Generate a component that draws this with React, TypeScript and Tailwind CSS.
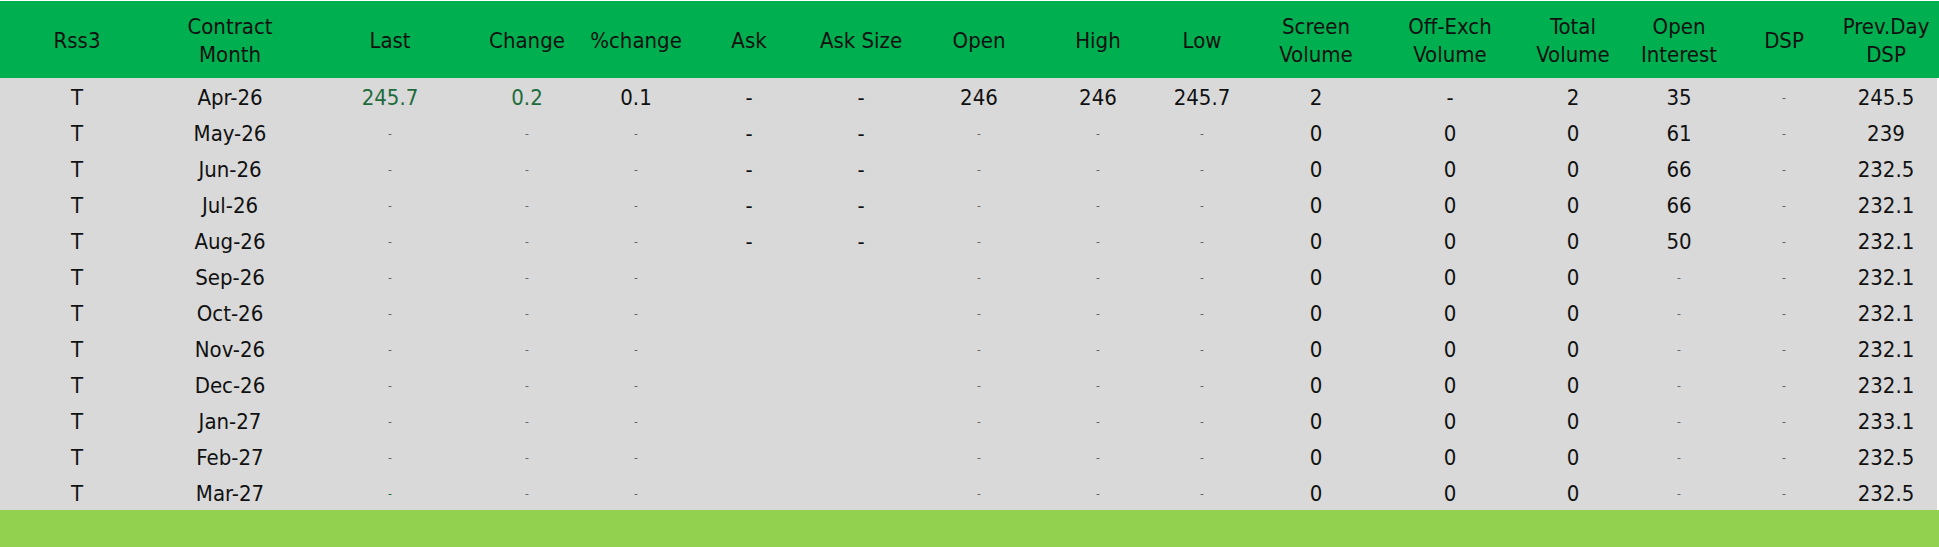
import React from "react";

type Cell = { v: string; kind?: "n" | "g" | "t" | "e" };

const months = [
  "Apr-26", "May-26", "Jun-26", "Jul-26", "Aug-26", "Sep-26",
  "Oct-26", "Nov-26", "Dec-26", "Jan-27", "Feb-27", "Mar-27",
];
const prev = ["245.5", "239", "232.5", "232.1", "232.1", "232.1", "232.1", "232.1", "232.1", "233.1", "232.5", "232.5"];
const oi = ["35", "61", "66", "66", "50"];

const T = (): Cell => ({ v: "-", kind: "t" });
const N = (v: string): Cell => ({ v, kind: "n" });
const E = (): Cell => ({ v: "", kind: "e" });

function buildRows(): Cell[][] {
  return months.map((m, i) => {
    if (i === 0) {
      return [
        N("T"), N(m), { v: "245.7", kind: "g" }, { v: "0.2", kind: "g" }, N("0.1"),
        N("-"), N("-"), N("246"), N("246"), N("245.7"), N("2"), N("-"), N("2"), N("35"), T(), N(prev[i]),
      ];
    }
    const early = i < 5;
    return [
      N("T"), N(m), T(), T(), T(),
      early ? N("-") : E(), early ? N("-") : E(),
      T(), T(), T(), N("0"), N("0"), N("0"),
      early ? N(oi[i]) : T(), T(), N(prev[i]),
    ];
  });
}

const headers: React.ReactNode[] = [
  "Rss3",
  <>Contract<br />Month</>,
  "Last",
  "Change",
  "%change",
  "Ask",
  "Ask Size",
  "Open",
  "High",
  "Low",
  <>Screen<br />Volume</>,
  <>Off-Exch<br />Volume</>,
  <>Total<br />Volume</>,
  <>Open<br />Interest</>,
  "DSP",
  <>Prev.Day<br />DSP</>,
];

const gridCls =
  "grid grid-cols-[154px_152px_168px_106px_112px_114px_110px_126px_112px_96px_132px_136px_110px_102px_108px_96px]";

export default function App() {
  const rows = buildRows();
  return (
    <div
      className="w-[1939px] h-[547px] bg-white pt-[1px] overflow-hidden text-[22px] text-[#111]"
      style={{ fontFamily: '"DejaVu Sans Condensed", "Liberation Sans", Arial, sans-serif' }}
    >
      <div className={`${gridCls} w-[1939px] h-[77px] bg-[#00b050]`}>
        {headers.map((h, i) => (
          <div key={i} className="flex items-center justify-center text-center leading-[28px] pt-[3px] whitespace-nowrap">
            <div>{h}</div>
          </div>
        ))}
      </div>
      <div className="w-[1937px] bg-[#d9d9d9]">
        {rows.map((r, ri) => (
          <div key={ri} className={`${gridCls} h-[36px]`}>
            {r.map((c, ci) => (
              <div key={ci} className="h-[36px] pt-[4px] leading-[32px] text-center whitespace-nowrap">
                {c.kind === "t" ? (
                  <span className={`text-[12px] align-[3px] ${ri === 11 && ci === 2 ? "text-[#1e6b3c]" : "text-[#666]"}`}>-</span>
                ) : c.kind === "g" ? (
                  <span className="text-[#1e6b3c]">{c.v}</span>
                ) : (
                  c.v
                )}
              </div>
            ))}
          </div>
        ))}
      </div>
      <div className="w-[1939px] h-[37px] bg-[#92d050]" />
    </div>
  );
}
